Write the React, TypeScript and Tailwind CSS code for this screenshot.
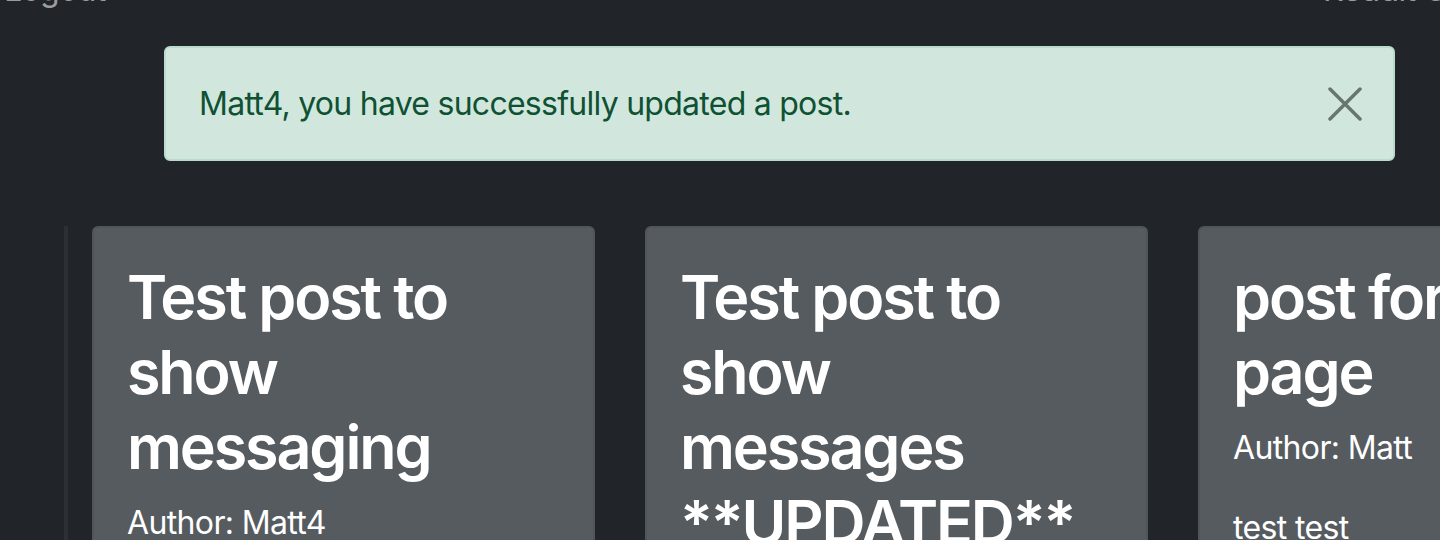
import React from "react";

const font = { fontFamily: "Inter, 'Noto Sans', sans-serif" };

function Card({ title, author, body }: { title: string; author: string; body?: string }) {
  return (
    <div className="w-[503px] shrink-0 h-[400px] rounded-[6px] border-2 border-[#50555a] bg-[#565b60] px-[33px] pt-[32px] text-white">
      <h2 className="m-0 max-w-[340px] text-[61px] leading-[75px] font-semibold tracking-[-0.035em] mb-[14px]">{title}</h2>
      <p className="text-[32px] leading-[48px] tracking-[-0.02em] mb-[32px]">{author}</p>
      {body && <p className="text-[32px] leading-[48px] tracking-[-0.02em]">{body}</p>}
    </div>
  );
}

export default function App() {
  return (
    <div className="w-[1440px] h-[540px] overflow-hidden bg-[#212529]" style={font}>
      <div className="flex h-[48px] -mt-[34px] overflow-hidden text-[32px] leading-[48px] tracking-[-0.02em] text-[#9a9da0]">
        <span className="w-[1323px] shrink-0 pl-[4px]">Logout</span>
        <span className="whitespace-nowrap">Reddit Clone</span>
      </div>
      <div className="ml-[164px] mr-[45px] mt-[32px] h-[115px] flex items-center justify-between rounded-[6px] border-2 border-[#badbcc] bg-[#d1e7dd] pl-[33px] pr-[31px] text-[#0f5132]">
        <span className="text-[32px] leading-[48px] tracking-[-0.023em]">Matt4, you have successfully updated a post.</span>
        <svg width="34" height="34" viewBox="0 0 34 34" className="shrink-0">
          <path d="M2 2 L32 32 M32 2 L2 32" stroke="#69756f" strokeWidth="3.5" strokeLinecap="round" />
        </svg>
      </div>
      <div className="mt-[65px] flex items-start">
        <div className="ml-[64px] w-[4px] h-[400px] shrink-0 bg-[#2b3035]" />
        <div className="ml-[24px] flex gap-[50px]">
          <Card title="Test post to show messaging" author="Author: Matt4" />
          <Card title="Test post to show messages **UPDATED**" author="Author: Matt4" />
          <Card title="post for page" author="Author: Matt" body="test test" />
        </div>
      </div>
    </div>
  );
}
